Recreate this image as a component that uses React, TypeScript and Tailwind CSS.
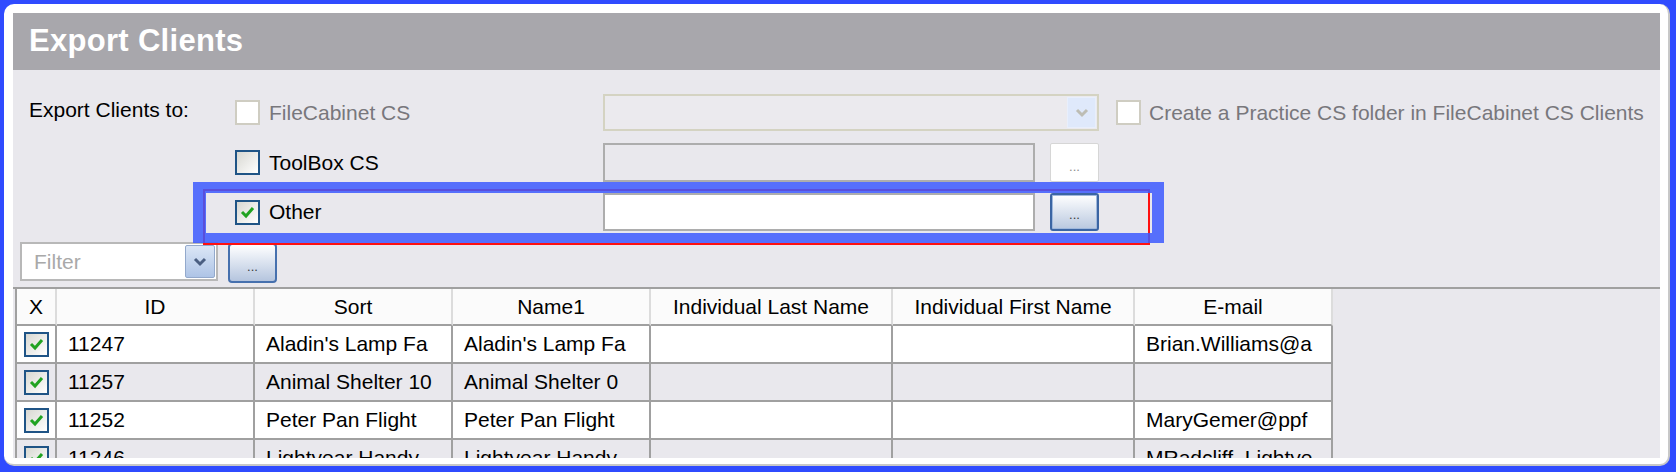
import React from "react";

type Row = { id: string; sort: string; name1: string; last: string; first: string; email: string };

const rows: Row[] = [
  { id: "11247", sort: "Aladin's Lamp Fa", name1: "Aladin's Lamp Fa", last: "", first: "", email: "Brian.Williams@a" },
  { id: "11257", sort: "Animal Shelter 10", name1: "Animal Shelter 0", last: "", first: "", email: "" },
  { id: "11252", sort: "Peter Pan Flight", name1: "Peter Pan Flight", last: "", first: "", email: "MaryGemer@ppf" },
  { id: "11246", sort: "Lightyear Handy", name1: "Lightyear Handy", last: "", first: "", email: "MRadcliff_Lightye" },
];

const headers = ["X", "ID", "Sort", "Name1", "Individual Last Name", "Individual First Name", "E-mail"];

function CheckBox({ checked = false, disabled = false }: { checked?: boolean; disabled?: boolean }) {
  if (disabled) {
    return <div className="w-[25px] h-[25px] shrink-0 border-2 border-[#cfcdc2] bg-white" />;
  }
  return (
    <div className="w-[25px] h-[25px] shrink-0 border-2 border-[#1f5486] bg-linear-to-br from-[#d8d8d2] to-white flex items-center justify-center">
      {checked && (
        <svg width="17" height="17" viewBox="0 0 17 17">
          <path d="M3 8 L7 12 L14 4" fill="none" stroke="#21a321" strokeWidth="3" />
        </svg>
      )}
    </div>
  );
}

function Chevron({ color }: { color: string }) {
  return (
    <svg width="16" height="12" viewBox="0 0 16 12">
      <path d="M3 3 L8 8 L13 3" fill="none" stroke={color} strokeWidth="3" />
    </svg>
  );
}

function DotsButton({ variant }: { variant: "disabled" | "focused" | "normal" }) {
  const cls =
    variant === "disabled"
      ? "bg-white border border-[#d6d6d6] rounded-[2px] text-[#8c8c8c]"
      : variant === "focused"
        ? "border-2 border-[#3b65a3] rounded-[3px] bg-linear-to-b from-white to-[#b9c8df] text-[#3a3a3a] shadow-[inset_0_0_0_1px_#9fb8dc]"
        : "border-2 border-[#4670ae] rounded-[4px] bg-linear-to-b from-white to-[#b5c5de] text-[#3a3a3a]";
  return (
    <div className={`w-[49px] h-full flex items-end justify-center pb-[8px] text-[13px] leading-none ${cls}`}>
      ...
    </div>
  );
}

export default function App() {
  return (
    <div className="w-[1676px] h-[472px] bg-[#2f4bff] pl-[4px] pt-[4px] pr-[6px] pb-[6px] font-['Liberation_Sans',Arial,sans-serif]">
      <div className="h-full rounded-[10px] bg-white border-r-2 border-b-2 border-[#c8c8c8] pl-[9px] pt-[9px] pr-[8px] pb-[6px]">
        <div className="relative h-full overflow-hidden bg-[#e9e8ed] text-[21px] text-black">
          {/* title bar */}
          <div className="h-[57px] bg-[#a8a7ac] pl-[16px] flex items-center text-white font-bold text-[31px] tracking-[0.3px]">
            Export Clients
          </div>

          {/* FileCabinet row */}
          <div className="mt-[24px] h-[37px] flex items-center pl-[16px]">
            <div className="w-[206px] -mt-[6px]">Export Clients to:</div>
            <div className="w-[368px] flex items-center gap-[9px] text-[#78777c]">
              <CheckBox disabled />
              <span>FileCabinet CS</span>
            </div>
            <div className="w-[496px] h-full border-2 border-[#d4d3c2] bg-[#ebeaee] flex justify-end p-[1px]">
              <div className="w-[29px] h-full bg-[#dfe9fb] border border-[#e8effc] flex items-center justify-center">
                <Chevron color="#bdbdb4" />
              </div>
            </div>
            <div className="ml-[17px] flex items-center gap-[8px] text-[#78777c]">
              <CheckBox disabled />
              <span>Create a Practice CS folder in FileCabinet CS Clients</span>
            </div>
          </div>

          {/* ToolBox row */}
          <div className="mt-[12px] h-[39px] flex items-center pl-[16px]">
            <div className="w-[206px]" />
            <div className="w-[368px] flex items-center gap-[9px]">
              <CheckBox />
              <span>ToolBox CS</span>
            </div>
            <div className="w-[432px] h-full border-2 border-[#adadad] bg-[#e9e8ed]" />
            <div className="ml-[15px] h-full">
              <DotsButton variant="disabled" />
            </div>
          </div>

          {/* Other row */}
          <div className="mt-[11px] h-[38px] flex items-center pl-[16px]">
            <div className="w-[206px]" />
            <div className="w-[368px] flex items-center gap-[9px]">
              <CheckBox checked />
              <span>Other</span>
            </div>
            <div className="w-[432px] h-full border-2 border-[#adadad] bg-white" />
            <div className="ml-[15px] h-full">
              <DotsButton variant="focused" />
            </div>
          </div>

          {/* Filter row */}
          <div className="mt-[11px] h-[39px] flex items-center pl-[7px]">
            <div className="w-[198px] h-full border-2 border-[#b8b8b8] bg-white flex items-center p-[1px]">
              <span className="flex-1 pl-[11px] text-[#a9a9a9]">Filter</span>
              <div className="w-[30px] h-full rounded-[2px] border border-[#93a9cc] bg-linear-to-b from-[#dbe6f6] to-[#aec4e6] flex items-center justify-center">
                <Chevron color="#4b5f82" />
              </div>
            </div>
            <div className="ml-[10px] w-[47px] h-[40px] mt-[2px]">
              <DotsButton variant="normal" />
            </div>
          </div>

          {/* grid */}
          <div className="mt-[6px] border-t-2 border-[#a0a0a0]">
            <div className="ml-[2px] w-max border-l-2 border-[#a0a0a0] grid grid-cols-[40px_198px_198px_198px_242px_242px_198px]">
              {headers.map((h) => (
                <div
                  key={h}
                  className="h-[37px] bg-[#fbfbfb] border-r-2 border-r-[#dcdcdc] border-b-2 border-b-[#a0a0a0] flex items-center justify-center"
                >
                  {h}
                </div>
              ))}
              {rows.map((r, i) => {
                const bg = i % 2 === 0 ? "bg-white" : "bg-[#e9e8ed]";
                const cells = [r.id, r.sort, r.name1, r.last, r.first, r.email];
                return (
                  <React.Fragment key={r.id}>
                    <div className={`h-[38px] ${bg} border-r-2 border-b-2 border-[#a0a0a0] flex items-center justify-center`}>
                      <CheckBox checked />
                    </div>
                    {cells.map((c, j) => (
                      <div
                        key={j}
                        className={`h-[38px] ${bg} border-r-2 border-b-2 border-[#a0a0a0] flex items-center pl-[11px] whitespace-nowrap overflow-hidden`}
                      >
                        {c}
                      </div>
                    ))}
                  </React.Fragment>
                );
              })}
            </div>
          </div>

          {/* annotation overlay */}
          <div className="absolute left-[190px] top-[176px] w-[947px] h-[56px] border-2 border-[#ff1010]" />
          <div className="absolute left-[180px] top-[169px] w-[971px] h-[61px] border-t-[11px] border-l-[13px] border-r-[12px] border-b-[10px] border-[#3c5aff]/85" />
        </div>
      </div>
    </div>
  );
}
